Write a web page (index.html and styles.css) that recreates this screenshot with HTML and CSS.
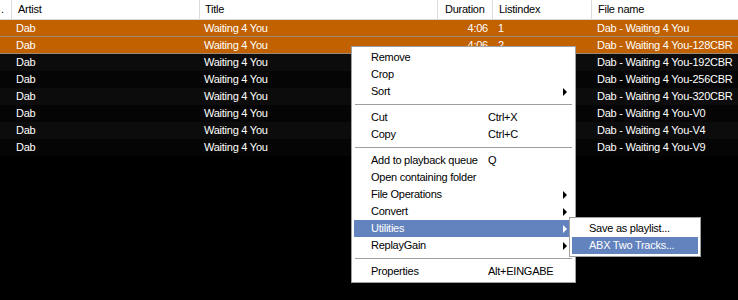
FILE: index.html
```html
<!DOCTYPE html>
<html lang="en">
<head>
  <meta charset="UTF-8" />
  <title>Playlist</title>
  <link rel="stylesheet" href="styles.css">
</head>
<body>

  <div class="playlist">
    <div class="head">
      <div class="col c0">.</div>
      <div class="col c1">Artist</div>
      <div class="col c2">Title</div>
      <div class="col c3">Duration</div>
      <div class="col c4">Listindex</div>
      <div class="col c5">File name</div>
    </div>

    <div class="row sel">
      <div class="c0"></div><div class="c1">Dab</div><div class="c2">Waiting 4 You</div>
      <div class="c3">4:06</div><div class="c4">1</div><div class="c5">Dab - Waiting 4 You</div>
    </div>
    <div class="row sel">
      <div class="c0"></div><div class="c1">Dab</div><div class="c2">Waiting 4 You</div>
      <div class="c3">4:06</div><div class="c4">2</div><div class="c5">Dab - Waiting 4 You-128CBR</div>
    </div>
    <!-- duration / index cells below are hidden by the menu -->
    <div class="row odd">
      <div class="c0"></div><div class="c1">Dab</div><div class="c2">Waiting 4 You</div>
      <div class="c3"></div><div class="c4"></div><div class="c5">Dab - Waiting 4 You-192CBR</div>
    </div>
    <div class="row">
      <div class="c0"></div><div class="c1">Dab</div><div class="c2">Waiting 4 You</div>
      <div class="c3"></div><div class="c4"></div><div class="c5">Dab - Waiting 4 You-256CBR</div>
    </div>
    <div class="row odd">
      <div class="c0"></div><div class="c1">Dab</div><div class="c2">Waiting 4 You</div>
      <div class="c3"></div><div class="c4"></div><div class="c5">Dab - Waiting 4 You-320CBR</div>
    </div>
    <div class="row">
      <div class="c0"></div><div class="c1">Dab</div><div class="c2">Waiting 4 You</div>
      <div class="c3"></div><div class="c4"></div><div class="c5">Dab - Waiting 4 You-V0</div>
    </div>
    <div class="row odd">
      <div class="c0"></div><div class="c1">Dab</div><div class="c2">Waiting 4 You</div>
      <div class="c3"></div><div class="c4"></div><div class="c5">Dab - Waiting 4 You-V4</div>
    </div>
    <div class="row">
      <div class="c0"></div><div class="c1">Dab</div><div class="c2">Waiting 4 You</div>
      <div class="c3"></div><div class="c4"></div><div class="c5">Dab - Waiting 4 You-V9</div>
    </div>
  </div>

  <!-- context menu -->
  <div class="menu main-menu">
    <div class="item">Remove</div>
    <div class="item">Crop</div>
    <div class="item sub">Sort</div>
    <div class="sep"></div>
    <div class="item"><span>Cut</span><span class="key">Ctrl+X</span></div>
    <div class="item"><span>Copy</span><span class="key">Ctrl+C</span></div>
    <div class="sep"></div>
    <div class="item"><span>Add to playback queue</span><span class="key">Q</span></div>
    <div class="item">Open containing folder</div>
    <div class="item sub">File Operations</div>
    <div class="item sub">Convert</div>
    <div class="item sub active">Utilities</div>
    <div class="item sub">ReplayGain</div>
    <div class="sep"></div>
    <div class="item"><span>Properties</span><span class="key">Alt+EINGABE</span></div>
  </div>

  <div class="menu sub-menu">
    <div class="item">Save as playlist...</div>
    <div class="item active">ABX Two Tracks...</div>
  </div>

</body>
</html>
```

FILE: styles.css
```css
body {
  margin: 0;
  background: #000;
  font-family: "Liberation Sans", Arial, sans-serif;
  font-size: 11px;
  letter-spacing: -0.25px;
  color: #fff;
  position: relative;
  width: 738px;
  height: 300px;
  overflow: hidden;
}

.head,
.row {
  display: grid;
  grid-template-columns: 12px 188px 238px 55px 99px 1fr;
}

.head {
  height: 19px;
  background: #fff;
  color: #000;
  border-bottom: 1px solid #d8d8d8;
}

.head .col {
  line-height: 19px;
  padding-left: 6px;
  border-right: 1px solid #dcdcdc;
  white-space: nowrap;
  overflow: hidden;
}

.head .c0 {
  padding-left: 1px;
}

.head .c2 {
  padding-left: 5px;
}

.head .c3 {
  padding-left: 7px;
}

.head .c5 {
  border-right: none;
}

.row {
  height: 17px;
  line-height: 17px;
  background: #050505;
  white-space: nowrap;
}

.row.odd {
  background: #0c0c0c;
}

.row.sel {
  background: #c16100;
  height: 16px;
  line-height: 16px;
  border-bottom: 1px solid #9c8a78;
}

.row > div {
  padding-left: 4px;
  overflow: hidden;
}

.row .c0 {
  padding: 0;
}

.row .c3 {
  text-align: right;
  padding: 0 5px 0 0;
}

.row .c4 {
  padding-left: 5px;
}

.row .c5 {
  padding-left: 5px;
}

/* menus */
.menu {
  position: absolute;
  background: #fff;
  color: #000;
  border: 1px solid #a0a0a0;
  padding: 2px;
}

.main-menu {
  left: 351px;
  top: 46px;
  width: 219px;
}

.sub-menu {
  left: 569px;
  top: 217px;
  width: 126px;
}

.item {
  height: 17px;
  line-height: 17px;
  padding-left: 17px;
  display: flex;
  position: relative;
  white-space: nowrap;
}

.item .key {
  position: absolute;
  left: 134px;
}

.item.sub::after {
  content: "";
  position: absolute;
  right: 6px;
  top: 5px;
  border-left: 4px solid #000;
  border-top: 4px solid transparent;
  border-bottom: 4px solid transparent;
}

.item.active {
  background: #6383be;
  color: #fff;
}

.item.active.sub::after {
  border-left-color: #fff;
}

.sep {
  height: 1px;
  margin: 4px 1px 4px;
  background: #a0a0a0;
}
```
